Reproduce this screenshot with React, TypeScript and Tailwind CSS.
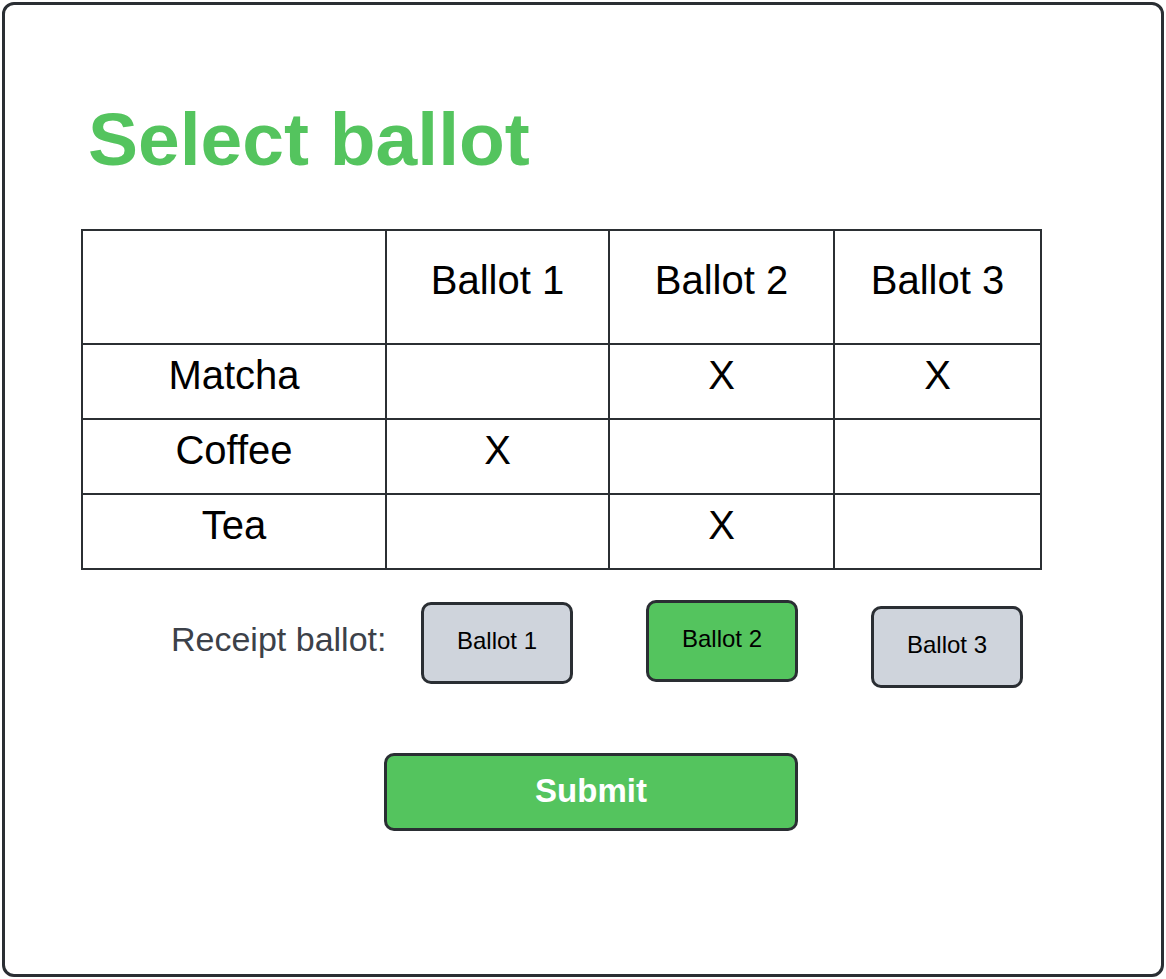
import React from "react";

const ballots = ["Ballot 1", "Ballot 2", "Ballot 3"];

const rows: { name: string; marks: boolean[] }[] = [
  { name: "Matcha", marks: [false, true, true] },
  { name: "Coffee", marks: [true, false, false] },
  { name: "Tea", marks: [false, true, false] },
];

const cell =
  "flex items-center justify-center border-r-2 border-b-2 border-[#2b2f33] pb-[14px]";

export default function App() {
  const selected = 1;

  return (
    <div
      className="bg-white p-[2px] h-[979px] w-[1166px]"
      style={{ fontFamily: '"Liberation Sans", Arial, sans-serif' }}
    >
      <div className="flex h-full flex-col rounded-[12px] border-[3px] border-[#2a2e33] pl-[76px]">
        {/* Title */}
        <h1 className="ml-[7px] mt-[97px] text-[75px] font-bold leading-none text-[#54c45e]">
          Select ballot
        </h1>

        {/* Ballot table */}
        <div className="mt-[52px] grid w-[961px] grid-cols-[304px_223px_225px_207px] border-l-2 border-t-2 border-[#2b2f33] text-[40px] text-black">
          <div className={`${cell} h-[114px]`} />
          {ballots.map((b) => (
            <div key={b} className={`${cell} h-[114px]`}>
              {b}
            </div>
          ))}
          {rows.map((r) => (
            <React.Fragment key={r.name}>
              <div className={`${cell} h-[75px]`}>{r.name}</div>
              {r.marks.map((m, i) => (
                <div key={i} className={`${cell} h-[75px]`}>
                  {m ? "X" : ""}
                </div>
              ))}
            </React.Fragment>
          ))}
        </div>

        {/* Receipt ballot picker */}
        <div className="mt-[30px] flex h-[88px] items-start">
          <div className="w-[340px] shrink-0 pl-[90px] pt-[22px]">
            <span className="text-[34px] leading-none text-[#3c4149]">
              Receipt ballot:
            </span>
          </div>
          <div className="flex items-start gap-[73px]">
            {ballots.map((b, i) => (
              <button
                key={b}
                className={`flex h-[82px] w-[152px] shrink-0 items-center justify-center rounded-[10px] border-[3px] border-[#2a2e33] pb-[5px] text-[24px] text-black ${
                  i === selected ? "bg-[#54c45e]" : "bg-[#cfd4dc]"
                } ${i === 0 ? "mt-[2px]" : i === 1 ? "mt-0" : "mt-[6px]"}`}
              >
                {b}
              </button>
            ))}
          </div>
        </div>

        {/* Submit */}
        <button className="ml-[303px] mt-[65px] flex h-[78px] w-[414px] items-center justify-center rounded-[10px] border-[3px] border-[#2a2e33] bg-[#54c45e] pb-[3px] text-[33px] font-bold text-white">
          Submit
        </button>
      </div>
    </div>
  );
}
